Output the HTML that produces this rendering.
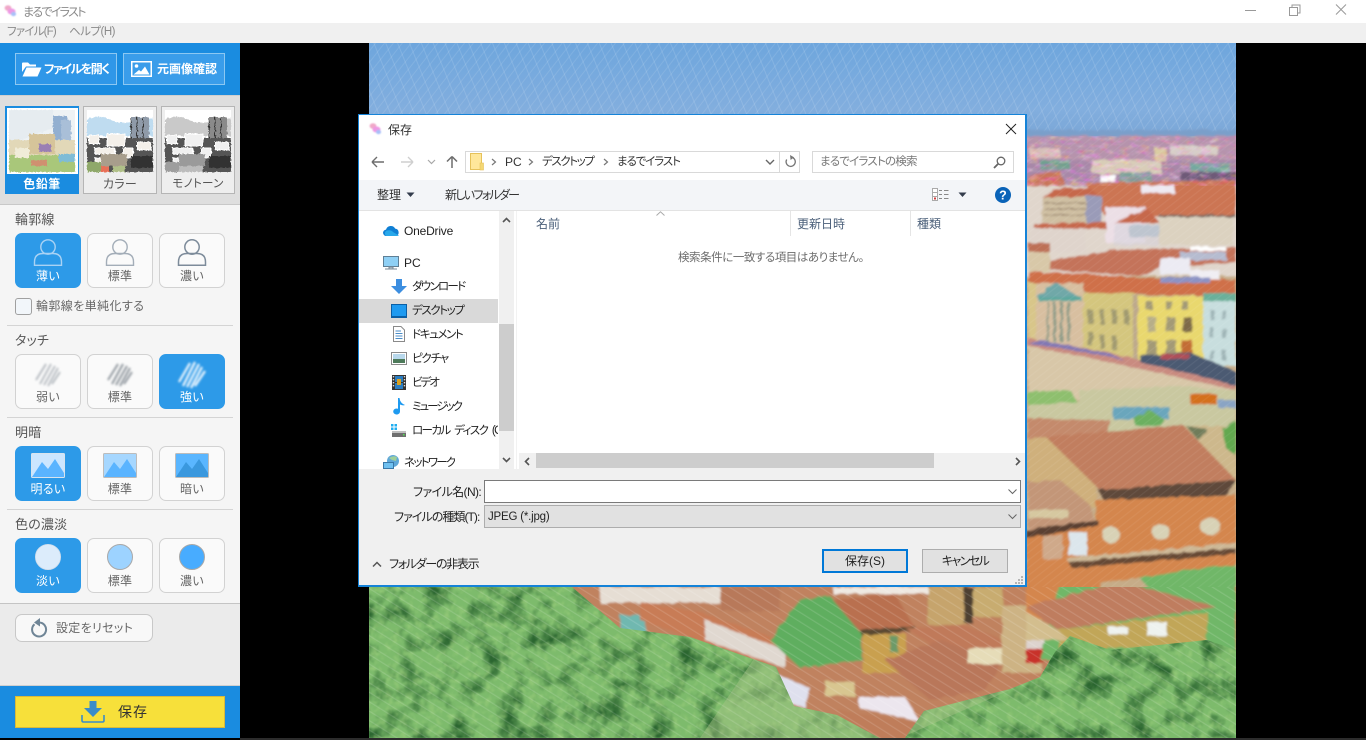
<!DOCTYPE html>
<html lang="ja"><head><meta charset="utf-8"><title>まるでイラスト</title>
<style>
*{box-sizing:border-box}
html,body{margin:0;padding:0;width:1366px;height:740px;overflow:hidden;background:#000}
body{position:relative;font-family:"Liberation Sans","Noto Sans CJK JP",sans-serif;font-feature-settings:"palt";font-size:12px;color:#333}
.a{position:absolute}
.t{position:absolute;white-space:nowrap;line-height:16px;height:16px}
.c{text-align:center}
.btn{position:absolute;width:66px;height:55px;border-radius:7px;background:#fafafa;border:1px solid #d2d2d2}
.btn.on{background:#2d9ae8;border-color:#2d9ae8}
.lb{position:absolute;width:66px;text-align:center;font-size:12px;line-height:16px;color:#666;white-space:nowrap;letter-spacing:.3px}
.lb.w{color:#fff}
.h{position:absolute;left:15px;font-size:13px;line-height:16px;color:#555;white-space:nowrap;letter-spacing:.2px}
.dv{position:absolute;left:7px;width:226px;height:1px;background:#d4d4d4}
svg{position:absolute;overflow:visible}
.n{color:#222;font-size:12px}
</style></head><body>

<!-- painting -->
<svg style="left:0;top:0" width="1366" height="740" viewBox="0 0 1366 740">
<defs>
<clipPath id="im"><rect x="369" y="43" width="867" height="695"/></clipPath>
<filter id="p" x="-5%" y="-5%" width="110%" height="110%"><feTurbulence type="fractalNoise" baseFrequency=".12" numOctaves="3" seed="5" result="n"/><feDisplacementMap in="SourceGraphic" in2="n" scale="4"/><feGaussianBlur stdDeviation="1"/></filter>
<filter id="tn" x="-5%" y="-5%" width="110%" height="110%"><feTurbulence type="fractalNoise" baseFrequency=".45" numOctaves="2" seed="9" result="n"/><feDisplacementMap in="SourceGraphic" in2="n" scale="3"/><feGaussianBlur stdDeviation=".3"/></filter>
<filter id="fol" x="0" y="0" width="100%" height="100%" color-interpolation-filters="sRGB"><feTurbulence type="fractalNoise" baseFrequency=".04" numOctaves="4" seed="8"/><feColorMatrix values="0 0 0 0 .17 0 0 0 0 .4 0 0 0 0 .19 3 0 0 0 -1.38"/><feGaussianBlur stdDeviation=".6"/></filter>
<filter id="fol2" x="0" y="0" width="100%" height="100%" color-interpolation-filters="sRGB"><feTurbulence type="fractalNoise" baseFrequency=".14" numOctaves="3" seed="21"/><feColorMatrix values="0 0 0 0 .68 0 0 0 0 .85 0 0 0 0 .52 3 0 0 0 -1.45"/><feGaussianBlur stdDeviation=".5"/></filter>
<filter id="town" x="0" y="0" width="100%" height="100%" color-interpolation-filters="sRGB"><feTurbulence type="fractalNoise" baseFrequency=".1 .22" numOctaves="3" seed="4"/><feColorMatrix values="1.7 0 0 0 0 0 1.3 0 0 0 0 0 1.4 0 .1 2.6 0 0 0 -.95"/><feGaussianBlur stdDeviation=".5"/></filter>
<filter id="bs" x="-30%" y="-30%" width="160%" height="160%"><feGaussianBlur stdDeviation="1"/></filter>
<pattern id="hatch" width="8" height="8" patternUnits="userSpaceOnUse" patternTransform="rotate(-58)"><rect width="1.2" height="8" fill="#fff" opacity=".13"/></pattern>
<pattern id="hatch2" width="11" height="11" patternUnits="userSpaceOnUse" patternTransform="rotate(-22)"><rect width="1" height="11" fill="#fff" opacity=".12"/></pattern>
<pattern id="hatch4" width="7" height="7" patternUnits="userSpaceOnUse" patternTransform="rotate(38)"><rect width="1" height="7" fill="#fff" opacity=".1"/></pattern>
<pattern id="hatch3" width="6" height="6" patternUnits="userSpaceOnUse" patternTransform="rotate(52)"><rect width="1.2" height="6" fill="#fff" opacity=".06"/></pattern>
<linearGradient id="sky" x1="0" y1="0" x2="0" y2="1"><stop offset="0" stop-color="#6ea6dd"/><stop offset=".7" stop-color="#82aede"/><stop offset="1" stop-color="#7aa6d6"/></linearGradient>
</defs>
<rect width="1366" height="740" fill="#000"/>
<rect x="240" y="738" width="1126" height="2" fill="#2c2c2c"/>
<g clip-path="url(#im)">
<rect x="369" y="43" width="867" height="695" fill="#c6ac88"/>
<rect x="369" y="43" width="867" height="95" fill="url(#sky)"/>
<rect x="369" y="43" width="867" height="95" fill="url(#hatch2)"/>
<rect x="369" y="43" width="867" height="95" fill="url(#hatch4)"/>
<g filter="url(#p)">
<rect x="1020" y="130" width="220" height="10" fill="#7a9fca"/>
<rect x="1020" y="136" width="220" height="50" fill="#b693ac"/>
<rect x="1020" y="160" width="220" height="22" fill="#a888a8"/>
<rect x="1092" y="160" width="70" height="14" fill="#d9cdb8"/><rect x="1155" y="148" width="12" height="14" fill="#dccba0"/>
<rect x="1170" y="146" width="48" height="9" fill="#d8cfc8"/><rect x="1030" y="148" width="30" height="10" fill="#d8c0b8"/>
<rect x="1120" y="172" width="32" height="10" fill="#7ea09a"/><rect x="1040" y="160" width="30" height="9" fill="#70a090"/>
<rect x="1190" y="163" width="40" height="9" fill="#74a8a0"/><rect x="1100" y="175" width="16" height="7" fill="#fff"/>
<path d="M1028 176 1060 170 1065 185 1028 190Z" fill="#c9745a"/>
<rect x="1180" y="172" width="56" height="13" fill="#6e5a78"/>
<rect x="1020" y="186" width="220" height="90" fill="#e0d6cc"/>
<path d="M1085 183 1236 180 1236 217 1105 216Z" fill="#cc7552"/>
<rect x="1141" y="185" width="34" height="8" fill="#efeaf2"/>
<path d="M1041 197 1060 188 1090 188 1100 197Z" fill="#c6684c"/>
<rect x="1042" y="197" width="48" height="26" fill="#cfbfa2"/>
<path d="M1044 203H1088M1044 209H1088M1044 215H1088" stroke="#8c7660" stroke-width="1"/>
<rect x="1086" y="196" width="16" height="30" fill="#9a9bb8"/>
<path d="M1034 224 1108 222 1108 228 1034 228Z" fill="#c6684c"/>
<rect x="1106" y="207" width="40" height="36" fill="#ecdfe6"/>
<path d="M1114 223 1147 208 1160 223Z" fill="#c6684c"/>
<rect x="1159" y="217" width="74" height="28" fill="#dcd2c0"/><rect x="1159" y="215" width="77" height="2" fill="#7d6a60"/>
<rect x="1129" y="225" width="30" height="12" fill="#a3b6c2"/>
<rect x="1114" y="224" width="45" height="22" fill="#d6d2da" opacity=".55"/>
<rect x="1030" y="228" width="55" height="24" fill="#dfd4cc"/>
<rect x="1028" y="243" width="22" height="14" fill="#bd7056"/>
<path d="M1045 262 1110 250 1200 248 1236 247 1236 262 1160 268 1140 276 1050 270Z" fill="#c4735a"/>
<rect x="1028" y="252" width="22" height="20" fill="#d8c8a8"/>
<rect x="1190" y="247" width="36" height="4" fill="#fff"/><rect x="1180" y="252" width="46" height="8" fill="#b6bcd0"/>
<rect x="1160" y="258" width="30" height="16" fill="#ecebf3"/><rect x="1190" y="270" width="30" height="12" fill="#f0eef3"/>
<path d="M1028 272 1090 274 1140 278 1236 280 1236 296 1140 294 1090 294 1082 290 1028 282Z" fill="#cf6f49"/>
<rect x="1160" y="277" width="50" height="6" fill="#8c93c4"/>
<rect x="1028" y="283" width="10" height="70" fill="#d8c68a"/>
<rect x="1036" y="283" width="48" height="64" fill="#d8bfa0"/>
<path d="M1036 297 1056 282 1080 298Z" fill="#6fa8a8"/><rect x="1038" y="297" width="44" height="4" fill="#5ca89e"/>
<g fill="#8f9c88"><rect x="1053" y="302" width="3" height="40"/><rect x="1060" y="302" width="3" height="40"/><rect x="1067" y="302" width="3" height="40"/><rect x="1047" y="302" width="2" height="40"/></g>
<rect x="1083" y="293" width="52" height="66" fill="#d4c67e"/>
<rect x="1133" y="295" width="6" height="66" fill="#bda98c"/>
<rect x="1138" y="296" width="66" height="66" fill="#e9d86e"/>
<rect x="1203" y="296" width="33" height="70" fill="#c8dede"/><rect x="1203" y="293" width="33" height="8" fill="#6ab09a"/>
<g fill="#a09a70"><rect x="1088" y="310" width="5" height="14"/><rect x="1100" y="310" width="5" height="14"/><rect x="1112" y="310" width="5" height="14"/><rect x="1124" y="310" width="5" height="14"/><rect x="1088" y="332" width="5" height="14"/><rect x="1100" y="335" width="5" height="14"/><rect x="1112" y="336" width="5" height="14"/></g>
<g fill="#a39a76"><rect x="1146" y="301" width="6" height="9"/><rect x="1166" y="301" width="6" height="9"/><rect x="1182" y="301" width="6" height="9"/><rect x="1147" y="317" width="9" height="15" fill="#b7ae88"/><rect x="1166" y="317" width="9" height="15"/><rect x="1183" y="317" width="9" height="15" fill="#7d6a48"/><rect x="1147" y="340" width="10" height="15"/><rect x="1166" y="340" width="10" height="15"/></g>
<rect x="1182" y="340" width="10" height="18" fill="#c26c35"/>
<g fill="#9fb4b6"><rect x="1210" y="310" width="4" height="10"/><rect x="1222" y="310" width="4" height="10"/><rect x="1210" y="328" width="4" height="10"/><rect x="1222" y="328" width="4" height="10"/><rect x="1210" y="350" width="4" height="10"/><rect x="1222" y="350" width="4" height="10"/></g>
<path d="M1028 342 1090 356 1236 378 1236 400 1028 400Z" fill="#d8c7a8"/>
<path d="M1028 346 1100 360 1236 390 1236 382 1110 353 1028 338Z" fill="#c98b80"/>
<path d="M1028 344 1060 348 1125 360 1110 354 1040 340Z" fill="#8278b4"/>
<path d="M1140 356 1190 352 1236 372 1236 386 1200 376 1140 362Z" fill="#4b5a72"/>
<rect x="1160" y="354" width="30" height="5" fill="#b04f58"/>
<path d="M1028 392 1070 390 1080 406 1028 408Z" fill="#8ebf6e"/>
<path d="M1080 390 1175 386 1236 390 1236 440 1028 440 1028 405 1080 402Z" fill="#c9c8a0"/>
<rect x="1113" y="407" width="56" height="12" fill="#6aa6bc"/>
<rect x="1190" y="394" width="27" height="10" fill="#d4701e"/>
<rect x="1218" y="400" width="18" height="8" fill="#8aa4c4"/>
<path d="M1134 418 1150 410 1165 420 1160 426 1136 426Z" fill="#6cb060"/>
<path d="M1028 418 1110 420 1106 436 1028 445Z" fill="#c48a6c"/>
<rect x="1183" y="426" width="53" height="60" fill="#cdb88c"/>
<path d="M1222 428 1236 420 1236 456 1226 448Z" fill="#62a850"/>
<path d="M1186 426 1208 430 1198 440Z" fill="#6f7c5a"/>
<path d="M1028 440 1046 437 1096 480 1096 508 1028 500Z" fill="#cfb07c"/>
<path d="M1046 437 1183 425 1236 480 1100 490Z" fill="#c17e5e"/>
<path d="M1098 490 1236 480 1226 495 1105 502Z" fill="#5f4a3a"/>
<path d="M1096 500 1236 495 1236 566 1040 590 1028 530 1096 525Z" fill="#d4864e"/>
<path d="M1028 482 1060 480 1090 505 1095 522 1028 532 1028 500Z" fill="#c39678"/>
<rect x="1028" y="510" width="40" height="8" fill="#d6c8a0"/>
<path d="M1026 530 1098 520 1098 528 1026 538Z" fill="#5a4030"/>
<path d="M1026 538 1100 525 1100 590 1026 600Z" fill="#d4864e"/>
<path d="M1066 558 1236 543 1236 548 1068 562Z" fill="#cdb896"/>
<path d="M1068 562 1236 548 1236 554 1072 568Z" fill="#664836"/>
<rect x="1043" y="535" width="20" height="24" fill="#cfa98a"/>
<rect x="1069" y="532" width="18" height="24" fill="#dce6ec"/>
<g fill="#d8d2b6"><ellipse cx="1111" cy="535" rx="9" ry="8"/><ellipse cx="1161" cy="532" rx="9" ry="8"/><ellipse cx="1210" cy="526" rx="10" ry="9"/></g>
<path d="M1140 578 1212 566 1236 566 1236 600 1160 600Z" fill="#6fb767"/>
</g>
<rect x="1020" y="136" width="220" height="50" filter="url(#town)" opacity=".35"/>
<rect x="1020" y="138" width="220" height="450" fill="url(#hatch3)"/>
</g>
</svg>

<!-- bottom painting -->
<svg style="left:0;top:0" width="1366" height="740" viewBox="0 0 1366 740">
<defs><clipPath id="g1"><path d="M369 587 572 587 620 628 690 637 776 667 794 706 837 715 898 748 924 711 1010 689 1040 677 1055 652 1070 636 1110 650 1207 640 1236 650 1236 738 369 738Z"/></clipPath><clipPath id="im2"><rect x="369" y="587" width="867" height="151"/></clipPath></defs>
<g clip-path="url(#im2)">
<g filter="url(#p)">
<rect x="560" y="580" width="690" height="165" fill="#c0825e"/>
<rect x="600" y="587" width="130" height="16" fill="#e6ded4"/>
<rect x="620" y="615" width="26" height="22" fill="#6fb8b0"/>
<path d="M640 602 700 612 780 640 770 665 690 637 640 620Z" fill="#c87b56"/>
<path d="M705 620 785 650 785 668 705 640Z" fill="#e0d8d0"/>
<rect x="720" y="587" width="60" height="24" fill="#b8795a"/>
<path d="M770 640 800 600 830 596 862 630 862 660 800 668Z" fill="#5fae5f"/>
<path d="M833 600 895 594 915 628 860 632Z" fill="#b97050"/>
<path d="M860 630 915 626 915 631 862 636Z" fill="#5a4a30"/>
<rect x="833" y="587" width="95" height="7" fill="#efe9e2"/>
<rect x="863" y="634" width="43" height="39" fill="#c9a050"/>
<rect x="890" y="636" width="8" height="16" fill="#6d9a68"/>
<rect x="928" y="587" width="38" height="38" fill="#c6a46c"/><rect x="964" y="587" width="9" height="36" fill="#4e4030"/><rect x="973" y="587" width="30" height="30" fill="#c8ac70"/>
<path d="M905 628 965 625 1004 640 1004 650 940 650Z" fill="#c07a5a"/>
<path d="M885 660 940 640 1002 662 985 690 930 700Z" fill="#b9775a"/>
<rect x="968" y="648" width="34" height="16" fill="#e6dcb8"/>
<rect x="1002" y="605" width="40" height="68" fill="#cdb384"/>
<rect x="1026" y="632" width="25" height="28" fill="#ddd3ce"/>
<rect x="1026" y="649" width="18" height="14" fill="#c8332a"/>
<path d="M772 672 810 688 805 708 785 702 772 695Z" fill="#dfe0ee"/>
<rect x="825" y="682" width="30" height="14" fill="#d8c690"/>
<path d="M858 697 905 697 920 722 860 708Z" fill="#ece6ee"/>
<path d="M838 710 900 720 920 722 900 750 860 740Z" fill="#bf7d5a"/>
<rect x="1026" y="580" width="60" height="40" fill="#d4864e"/>
<path d="M1060 580 1236 580 1236 660 1040 660Z" fill="#6fb767"/>
<path d="M1026 607 1120 581 1216 607 1058 630Z" fill="#bf7d5e"/>
<path d="M1058 630 1208 612 1206 645 1060 650Z" fill="#c1a658"/>
<rect x="1108" y="627" width="20" height="7" fill="#eef2ee"/><rect x="1147" y="622" width="20" height="14" fill="#eef2ee"/>
<path d="M1026 612 1058 630 1068 640 1026 640Z" fill="#d3be8e"/>
</g>
<g clip-path="url(#g1)">
<rect x="369" y="587" width="867" height="151" fill="#7dbb6c"/>
<rect x="369" y="587" width="867" height="151" filter="url(#fol)"/>
<rect x="369" y="587" width="867" height="151" filter="url(#fol2)" opacity=".4"/>
<path d="M760 650 1010 690 900 738 700 738Z" fill="#a9c688" opacity=".45"/>
</g>
<rect x="369" y="587" width="867" height="151" fill="url(#hatch)"/>
</g>
</svg>

<!-- title & menu -->
<div class="a" style="left:0;top:0;width:1366px;height:23px;background:#fff"></div>
<svg style="left:4px;top:4px" width="13" height="14" viewBox="0 0 13 14"><defs><filter id="b1" x="-30%" y="-30%" width="160%" height="160%"><feGaussianBlur stdDeviation=".7"/></filter></defs><g filter="url(#b1)"><ellipse cx="4" cy="4" rx="3.4" ry="2.8" fill="#f0a8c8"/><ellipse cx="7.5" cy="7.5" rx="4" ry="3" fill="#ee98e4"/><ellipse cx="9.5" cy="10" rx="2.6" ry="2.2" fill="#a8c0f8"/></g></svg>
<div class="t" style="left:23px;top:4px;color:#8a8a8a;font-size:12px;letter-spacing:-1.7px">まるでイラスト</div>
<div class="a" style="left:0;top:23px;width:1366px;height:20px;background:#f0f0f0"></div>
<div class="t" style="left:7px;top:24px;color:#8a8a8a;font-size:11.5px;letter-spacing:-.8px">ファイル(F)</div>
<div class="t" style="left:69px;top:24px;color:#8a8a8a;font-size:11.5px;letter-spacing:-.5px">ヘルプ(H)</div>
<svg style="left:1245px;top:5px" width="12" height="12"><path d="M0 5.5H11" stroke="#999" stroke-width="1"/></svg>
<svg style="left:1289px;top:4px" width="12" height="12"><path d="M.5 3.5H8.5V11.5H.5ZM3 3V1H11V9H9" fill="none" stroke="#999" stroke-width="1"/></svg>
<svg style="left:1335px;top:4px" width="12" height="12"><path d="M1 .5 11 10.5M11 .5 1 10.5" stroke="#999" stroke-width="1"/></svg>

<!-- sidebar -->
<div class="a" style="left:0;top:43px;width:240px;height:695px;background:#f5f5f5"></div>
<div class="a" style="left:0;top:43px;width:240px;height:52px;background:#1a8ce0"></div>
<div class="a" style="left:0;top:95px;width:240px;height:110px;background:#dedede;border-top:1px solid #cfcfcf;border-bottom:1px solid #c8c8c8"></div>
<div class="a" style="left:15px;top:53px;width:102px;height:32px;background:#2f97e8;border:1px solid #8cc8f2"></div>
<div class="a" style="left:123px;top:53px;width:102px;height:32px;background:#3a9dea;border:1px solid #8cc8f2"></div>
<svg style="left:22px;top:61px" width="20" height="17" viewBox="0 0 20 17"><path d="M0 2.5Q0 1.5 1 1.5H6L8 3.5H14V5.5H4L0 11Z" fill="#fff"/><path d="M4.5 6.5H19.5L15.5 15.5H.5Z" fill="#fff"/></svg>
<div class="t" style="left:44px;top:61px;color:#fff;font-weight:bold;font-size:12px;letter-spacing:-1.5px">ファイルを開く</div>
<svg style="left:131px;top:61px" width="21" height="16" viewBox="0 0 21 16"><rect x=".75" y=".75" width="19.5" height="14.5" fill="#3a9dea" stroke="#fff" stroke-width="1.5"/><circle cx="5.5" cy="5" r="1.8" fill="#fff"/><path d="M2.5 13.5 8 9l2 1.5L14 5.5l4.5 8Z" fill="#fff"/></svg>
<div class="t" style="left:157px;top:61px;color:#fff;font-weight:bold;font-size:12px">元画像確認</div>

<!-- thumbs -->
<div class="a" style="left:5px;top:106px;width:74px;height:88px;background:#1a8ce0"></div>
<div class="a" style="left:7px;top:108px;width:71px;height:66px;background:#fff"></div>
<svg style="left:9px;top:110px" width="66" height="62" viewBox="0 0 66 62"><rect width="66" height="62" fill="#eef2f4"/><g filter="url(#tn)"><path d="M0 0H44V18L0 34Z" fill="#e6ecf0"/><rect x="44" y="6" width="14" height="24" fill="#92afd0"/><rect x="52" y="10" width="10" height="22" fill="#a9bfd8"/><rect x="0" y="30" width="66" height="16" fill="#e2d8b8"/><rect x="20" y="24" width="26" height="20" fill="#d6c49a"/><rect x="30" y="34" width="12" height="8" fill="#9a7fb4"/><rect x="0" y="45" width="66" height="17" fill="#a9c77a"/><rect x="6" y="38" width="14" height="10" fill="#f0ecd8"/><rect x="50" y="44" width="16" height="8" fill="#7fbcd6"/><rect x="22" y="50" width="16" height="6" fill="#d09070"/></g></svg>
<div class="lb w" style="left:9px;top:176px;font-weight:bold;letter-spacing:.5px">色鉛筆</div>
<div class="a" style="left:83px;top:106px;width:74px;height:88px;background:#eee;border:1px solid #b5b5b5"></div>
<svg style="left:87px;top:110px" width="66" height="62" viewBox="0 0 66 62"><rect width="66" height="62" fill="#fff"/><g filter="url(#tn)"><path d="M0 9Q14 4 24 10T66 8V26H0Z" fill="#bfdcf0"/><rect x="44" y="7" width="18" height="24" fill="#8f9aa8"/><path d="M44 7V31M50 7V31M56 7V31" stroke="#333"/><rect y="28" width="66" height="34" fill="#555"/><path d="M2 25H12V34H2ZM20 24H38V36H20ZM8 38H28V44H8ZM8 48H24V52H8ZM36 38H46V48H36ZM50 32H64V40H50Z" fill="#f4f0ea" stroke="#fff"/><rect x="14" y="44" width="26" height="12" fill="#a89e8c"/><rect x="44" y="46" width="22" height="12" fill="#333"/><rect y="52" width="14" height="10" fill="#8fa86a"/><rect x="14" y="56" width="8" height="6" fill="#e87058"/><rect x="26" y="56" width="12" height="6" fill="#b0c088"/></g></svg>
<div class="lb" style="left:87px;top:176px;color:#555">カラー</div>
<div class="a" style="left:161px;top:106px;width:74px;height:88px;background:#eee;border:1px solid #b5b5b5"></div>
<svg style="left:165px;top:110px" width="66" height="62" viewBox="0 0 66 62"><rect width="66" height="62" fill="#fff"/><g filter="url(#tn)"><path d="M0 9Q14 4 24 10T66 8V26H0Z" fill="#c9c9c9"/><rect x="44" y="7" width="18" height="24" fill="#8a8a8a"/><path d="M44 7V31M50 7V31M56 7V31" stroke="#333"/><rect y="28" width="66" height="34" fill="#555"/><path d="M2 25H12V34H2ZM20 24H38V36H20ZM8 38H28V44H8ZM8 48H24V52H8ZM36 38H46V48H36ZM50 32H64V40H50Z" fill="#f0f0f0" stroke="#fff"/><rect x="14" y="44" width="26" height="12" fill="#9a9a9a"/><rect x="44" y="46" width="22" height="12" fill="#333"/><rect y="52" width="14" height="10" fill="#9e9e9e"/><rect x="14" y="56" width="24" height="6" fill="#bcbcbc"/></g></svg>
<div class="lb" style="left:165px;top:176px;color:#555;font-size:11.5px">モノトーン</div>

<!-- sections -->
<div class="h" style="top:212px">輪郭線</div>
<div class="btn on" style="left:15px;top:233px"></div><div class="btn" style="left:87px;top:233px"></div><div class="btn" style="left:159px;top:233px"></div>
<svg style="left:33px;top:237px" width="30" height="30" viewBox="0 0 30 30"><g fill="none" stroke="#a9d2f4" stroke-width="1.4"><circle cx="15" cy="10" r="7.2"/><path d="M1.5 28.3V25Q1.5 16.5 10 16.5H20Q28.5 16.5 28.5 25V28.3Z"/></g></svg>
<svg style="left:105px;top:237px" width="30" height="30" viewBox="0 0 30 30"><g fill="none" stroke="#a3adb8" stroke-width="1.4"><circle cx="15" cy="10" r="7.2"/><path d="M1.5 28.3V25Q1.5 16.5 10 16.5H20Q28.5 16.5 28.5 25V28.3Z"/></g></svg>
<svg style="left:177px;top:237px" width="30" height="30" viewBox="0 0 30 30"><g fill="none" stroke="#7d8b9a" stroke-width="1.5"><circle cx="15" cy="10" r="7.2"/><path d="M1.5 28.3V25Q1.5 16.5 10 16.5H20Q28.5 16.5 28.5 25V28.3Z"/></g></svg>
<div class="lb w" style="left:15px;top:268px">薄い</div><div class="lb" style="left:87px;top:268px">標準</div><div class="lb" style="left:159px;top:268px">濃い</div>
<div class="a" style="left:15px;top:298px;width:17px;height:17px;border:1px solid #a0a0a0;border-radius:3px;background:#f2f6fa"></div>
<div class="t" style="left:36px;top:298px;color:#666;font-size:12px;letter-spacing:.4px">輪郭線を単純化する</div>
<div class="dv" style="top:325px"></div>

<div class="h" style="top:333px">タッチ</div>
<div class="btn" style="left:15px;top:354px"></div><div class="btn" style="left:87px;top:354px"></div><div class="btn on" style="left:159px;top:354px"></div>
<svg style="left:33px;top:358px" width="30" height="30" viewBox="0 0 30 30"><g filter="url(#bs)" stroke="#b0b6bc" stroke-width="1.7" fill="none"><path d="M3 22 13 6M7 26 18 6M11 27 22 8M15 28 25 10M19 26 27 14"/></g></svg>
<svg style="left:105px;top:358px" width="30" height="30" viewBox="0 0 30 30"><g filter="url(#bs)" stroke="#8e959c" stroke-width="1.9" fill="none"><path d="M3 22 13 6M7 26 18 6M11 27 22 8M15 28 25 10M19 26 27 14"/></g></svg>
<svg style="left:177px;top:358px" width="30" height="30" viewBox="0 0 30 30"><g filter="url(#bs)" stroke="#f4faff" stroke-width="2.2" fill="none"><path d="M2 24 13 5M6 28 18 4M10 29 22 6M14 30 25 9M18 28 28 13"/></g></svg>
<div class="lb" style="left:15px;top:389px">弱い</div><div class="lb" style="left:87px;top:389px">標準</div><div class="lb w" style="left:159px;top:389px">強い</div>
<div class="dv" style="top:417px"></div>

<div class="h" style="top:425px">明暗</div>
<div class="btn on" style="left:15px;top:446px"></div><div class="btn" style="left:87px;top:446px"></div><div class="btn" style="left:159px;top:446px"></div>
<svg style="left:31px;top:453px" width="34" height="25" viewBox="0 0 34 25"><rect x=".5" y=".5" width="33" height="24" rx="1" fill="#cbe6ff" stroke="#d8e4ee"/><path d="M1 24 11 9 17 16 24 6 33 20V24Z" fill="#5ab4ff"/></svg>
<svg style="left:103px;top:453px" width="34" height="25" viewBox="0 0 34 25"><rect x=".5" y=".5" width="33" height="24" rx="1" fill="#a6d7ff" stroke="#bcbcbc"/><path d="M1 24 11 9 17 16 24 6 33 20V24Z" fill="#5ab4ff"/></svg>
<svg style="left:175px;top:453px" width="34" height="25" viewBox="0 0 34 25"><rect x=".5" y=".5" width="33" height="24" rx="1" fill="#5ab6ff" stroke="#bcbcbc"/><path d="M1 24 11 9 17 16 24 6 33 20V24Z" fill="#3a98de"/></svg>
<div class="lb w" style="left:15px;top:481px">明るい</div><div class="lb" style="left:87px;top:481px">標準</div><div class="lb" style="left:159px;top:481px">暗い</div>
<div class="dv" style="top:509px"></div>

<div class="h" style="top:517px">色の濃淡</div>
<div class="btn on" style="left:15px;top:538px"></div><div class="btn" style="left:87px;top:538px"></div><div class="btn" style="left:159px;top:538px"></div>
<svg style="left:35px;top:544px" width="26" height="26"><circle cx="13" cy="13" r="12.6" fill="#dcecfb" stroke="#cfdcea" stroke-width=".8"/></svg>
<svg style="left:107px;top:544px" width="26" height="26"><circle cx="13" cy="13" r="12.5" fill="#9dd3ff" stroke="#a8a8a8"/></svg>
<svg style="left:179px;top:544px" width="26" height="26"><circle cx="13" cy="13" r="12.5" fill="#48acff" stroke="#a8a8a8"/></svg>
<div class="lb w" style="left:15px;top:573px">淡い</div><div class="lb" style="left:87px;top:573px">標準</div><div class="lb" style="left:159px;top:573px">濃い</div>

<div class="a" style="left:0;top:603px;width:240px;height:83px;background:#ebebeb;border-top:1px solid #c4c4c4;border-bottom:1px solid #cfcfcf"></div>
<div class="a" style="left:15px;top:614px;width:138px;height:28px;border-radius:7px;background:#f8f8f8;border:1px solid #c8c8c8"></div>
<svg style="left:30px;top:618px" width="18" height="20" viewBox="0 0 18 20"><path d="M4.5 6.2A7 7 0 1 0 9 4.5" fill="none" stroke="#6f8596" stroke-width="2"/><path d="M10 0 4 4.5 10 8.5Z" fill="#6f8596"/></svg>
<div class="t" style="left:56px;top:620px;color:#666;font-size:12px;letter-spacing:.3px">設定をリセット</div>

<div class="a" style="left:0;top:686px;width:240px;height:52px;background:#1a8ce0"></div>
<div class="a" style="left:15px;top:696px;width:210px;height:32px;background:#f7e03a;border:1px solid #d9b93a"></div>
<svg style="left:81px;top:700px" width="24" height="23" viewBox="0 0 24 23"><path d="M8.5 1H15.5V8H21L12 17 3 8H8.5Z" fill="#3a8cc8"/><path d="M1 15V20.5Q1 22 2.5 22H21.5Q23 22 23 20.5V15" fill="none" stroke="#3a8cc8" stroke-width="1.6"/></svg>
<div class="t" style="left:118px;top:703px;color:#333;font-size:14px;height:18px;line-height:18px;letter-spacing:1px">保存</div>

<!-- dialog -->
<div class="a" style="left:358px;top:114px;width:669px;height:473px;background:#fff;border:1px solid #1583d8;border-width:1px 2px 2px 1px"></div>
<svg style="left:369px;top:122px" width="13" height="14" viewBox="0 0 13 14"><g filter="url(#b1)"><ellipse cx="4" cy="4" rx="3.4" ry="2.8" fill="#f0a8c8"/><ellipse cx="7.5" cy="7.5" rx="4" ry="3" fill="#ee98e4"/><ellipse cx="9.5" cy="10" rx="2.6" ry="2.2" fill="#a8c0f8"/></g></svg>
<div class="t n" style="left:388px;top:122px;color:#333">保存</div>
<svg style="left:1005px;top:123px" width="12" height="12"><path d="M1 1 11 11M11 1 1 11" stroke="#222" stroke-width="1"/></svg>

<svg style="left:371px;top:155px" width="14" height="14" viewBox="0 0 14 14"><path d="M1 7H13M1 7 6 2M1 7 6 12" fill="none" stroke="#6d6d6d" stroke-width="1.4"/></svg>
<svg style="left:400px;top:155px" width="14" height="14" viewBox="0 0 14 14"><path d="M1 7H13M13 7 8 2M13 7 8 12" fill="none" stroke="#cfcfcf" stroke-width="1.4"/></svg>
<svg style="left:427px;top:159px" width="9" height="6" viewBox="0 0 9 6"><path d="M1 1 4.5 4.5 8 1" fill="none" stroke="#a8a8a8" stroke-width="1.2"/></svg>
<svg style="left:445px;top:155px" width="14" height="14" viewBox="0 0 14 14"><path d="M7 13V1.5M7 1.5 2 6.5M7 1.5 12 6.5" fill="none" stroke="#6d6d6d" stroke-width="1.5"/></svg>
<div class="a" style="left:465px;top:151px;width:335px;height:22px;border:1px solid #d9d9d9;background:#fff"></div>
<div class="a" style="left:779px;top:151px;width:1px;height:22px;background:#d9d9d9"></div>
<svg style="left:470px;top:153px" width="14" height="18" viewBox="0 0 14 18"><rect x=".5" y=".5" width="11" height="16" fill="#ffe79a" stroke="#e6c25a"/><rect x="10" y="10" width="3.5" height="7" fill="#f4d874" stroke="#e6c25a" stroke-width=".6"/></svg>
<svg style="left:491px;top:158px" width="6" height="8" viewBox="0 0 6 8"><path d="M1 1 4.5 4 1 7" fill="none" stroke="#777" stroke-width="1.2"/></svg>
<div class="t n" style="left:505px;top:154px;color:#333">PC</div>
<svg style="left:528px;top:158px" width="6" height="8" viewBox="0 0 6 8"><path d="M1 1 4.5 4 1 7" fill="none" stroke="#777" stroke-width="1.2"/></svg>
<div class="t n" style="left:542px;top:154px;color:#333;font-size:11.5px;letter-spacing:-1.4px">デスクトップ</div>
<svg style="left:603px;top:158px" width="6" height="8" viewBox="0 0 6 8"><path d="M1 1 4.5 4 1 7" fill="none" stroke="#777" stroke-width="1.2"/></svg>
<div class="t n" style="left:617px;top:154px;color:#333;font-size:11.5px;letter-spacing:-1.1px">まるでイラスト</div>
<svg style="left:765px;top:159px" width="10" height="7" viewBox="0 0 10 7"><path d="M1 1 5 5 9 1" fill="none" stroke="#666" stroke-width="1.4"/></svg>
<svg style="left:784px;top:155px" width="12" height="13" viewBox="0 0 12 13"><path d="M7 2.2A4.6 4.6 0 1 1 2.7 4.5" fill="none" stroke="#777" stroke-width="1.3"/><path d="M6 0 10 2.2 6.6 5Z" fill="#777"/></svg>
<div class="a" style="left:812px;top:151px;width:202px;height:22px;border:1px solid #d9d9d9;background:#fff"></div>
<div class="t" style="left:820px;top:154px;color:#777;font-size:11.5px;letter-spacing:-.8px">まるでイラストの検索</div>
<svg style="left:993px;top:156px" width="13" height="13" viewBox="0 0 13 13"><circle cx="8" cy="5" r="3.8" fill="none" stroke="#666" stroke-width="1.3"/><path d="M5.2 7.8 1 12" stroke="#666" stroke-width="1.8"/></svg>

<div class="a" style="left:359px;top:180px;width:666px;height:31px;background:#f3f5f8;border-bottom:1px solid #e3e3e3"></div>
<div class="t n" style="left:377px;top:187px;color:#333;font-size:12px">整理</div>
<svg style="left:406px;top:192px" width="9" height="6"><path d="M.5.5H8.5L4.5 5Z" fill="#333c4c"/></svg>
<div class="t n" style="left:445px;top:187px;color:#333;font-size:12px;letter-spacing:-1.7px">新しいフォルダー</div>
<svg style="left:932px;top:188px" width="17" height="13" viewBox="0 0 17 13"><path d="M.5.5H5.5V12.5H.5ZM.5 4.5H5.5M.5 8.5H5.5" fill="#fff" stroke="#aaa"/><path d="M7 2.5H10M12 2.5H16.5M7 6.5H10M12 6.5H16.5M7 10.5H10M12 10.5H16.5" stroke="#888"/><rect x="2" y="9.5" width="2" height="2" fill="#d04040"/></svg>
<svg style="left:958px;top:192px" width="9" height="6"><path d="M.5.5H8.5L4.5 5Z" fill="#333c4c"/></svg>
<svg style="left:995px;top:187px" width="16" height="16"><circle cx="8" cy="8" r="8" fill="#0a63b8"/><text x="8" y="12.5" font-size="12.5" font-weight="bold" fill="#fff" text-anchor="middle" font-family="Liberation Sans,sans-serif">?</text></svg>

<!-- nav tree -->
<div class="a" style="left:359px;top:299px;width:139px;height:24px;background:#d9d9d9"></div>
<svg style="left:383px;top:224px" width="17" height="13" viewBox="0 0 17 13"><path d="M3.5 12A3.2 3.2 0 0 1 3 5.6 5 5 0 0 1 12.2 4.6 3.8 3.8 0 0 1 13 12Z" fill="#0f7fd4"/><path d="M3.5 12A3 3 0 0 1 4 6.5Q8 5.5 10 8L16 11.5Q15 12 13 12Z" fill="#28a8ea"/></svg>
<div class="t n" style="left:404px;top:223px;color:#222;letter-spacing:-.2px">OneDrive</div>
<svg style="left:383px;top:256px" width="17" height="14" viewBox="0 0 17 14"><rect x=".5" y=".5" width="15" height="10" fill="#8fd0f5" stroke="#5f7f95"/><path d="M6 11H10V13H6ZM2 13H14" stroke="#7a8a96" fill="#c4ced6"/></svg>
<div class="t n" style="left:404px;top:255px;color:#222">PC</div>
<svg style="left:391px;top:279px" width="16" height="15" viewBox="0 0 16 15"><path d="M5 0H11V7H16L8 15 0 7H5Z" fill="#3c8ee0"/></svg>
<div class="t n" style="left:412px;top:279px;color:#222;font-size:11.5px;letter-spacing:-1.7px">ダウンロード</div>
<svg style="left:391px;top:304px" width="16" height="14" viewBox="0 0 16 14"><rect x=".5" y=".5" width="15" height="12" fill="#1e9af0" stroke="#0b5fa5"/><path d="M0 13.5H16" stroke="#0b5fa5"/></svg>
<div class="t n" style="left:412px;top:303px;color:#222;font-size:11.5px;letter-spacing:-1.4px">デスクトップ</div>
<svg style="left:393px;top:326px" width="12" height="16" viewBox="0 0 12 16"><path d="M.5.5H8L11.5 4V15.5H.5Z" fill="#fff" stroke="#8a8a8a"/><path d="M2.5 5H8M2.5 7.5H9.5M2.5 10H9.5M2.5 12.5H9.5" stroke="#4b8dc8"/></svg>
<div class="t n" style="left:412px;top:327px;color:#222;font-size:11.5px;letter-spacing:-1.4px">ドキュメント</div>
<svg style="left:391px;top:352px" width="16" height="13" viewBox="0 0 16 13"><rect x=".5" y=".5" width="15" height="12" fill="#fff" stroke="#8a8a8a"/><rect x="2" y="2" width="12" height="5" fill="#b8d8ec"/><rect x="2" y="7" width="12" height="4" fill="#4d7a5a"/></svg>
<div class="t n" style="left:412px;top:351px;color:#222;font-size:11.5px;letter-spacing:-1.2px">ピクチャ</div>
<svg style="left:392px;top:375px" width="14" height="15" viewBox="0 0 14 15"><rect width="14" height="15" fill="#333"/><rect x="3" y="1" width="8" height="6" fill="#2a7cc0"/><rect x="3" y="8" width="8" height="6" fill="#2a7cc0"/><rect x="5" y="4" width="4" height="6" fill="#d8a020"/><path d="M.8 1h1.4v1.4H.8zM.8 4h1.4v1.4H.8zM.8 7h1.4v1.4H.8zM.8 10h1.4v1.4H.8zM11.8 1h1.4v1.4h-1.4zM11.8 4h1.4v1.4h-1.4zM11.8 7h1.4v1.4h-1.4zM11.8 10h1.4v1.4h-1.4z" fill="#ddd"/></svg>
<div class="t n" style="left:412px;top:375px;color:#222;font-size:11.5px;letter-spacing:-2px">ビデオ</div>
<svg style="left:393px;top:398px" width="13" height="17" viewBox="0 0 13 17"><path d="M5 0H6.5Q7 5 12 7 10 8 7 6.5V13.5A3.4 3 0 1 1 5 10.8Z" fill="#1e9af0"/></svg>
<div class="t n" style="left:412px;top:399px;color:#222;font-size:11.5px;letter-spacing:-2px">ミュージック</div>
<svg style="left:391px;top:424px" width="15" height="14" viewBox="0 0 15 14"><path d="M0 0H2.5V2.5H0ZM3.5 0H6V2.5H3.5ZM0 3.5H2.5V6H0ZM3.5 3.5H6V6H3.5Z" fill="#20aef0"/><rect x="1" y="8" width="14" height="5" fill="#6f6f6f"/><rect x="1" y="7" width="14" height="2" fill="#c0c0c0"/><rect x="12" y="10" width="1.5" height="1.5" fill="#4fe04f"/></svg>
<div class="a" style="left:412px;top:423px;width:86px;height:16px;overflow:hidden"><div class="t n" style="left:0;top:0;color:#222;font-size:11.5px;letter-spacing:-1.6px;word-spacing:3px">ローカル ディスク (C:)</div></div>
<svg style="left:383px;top:455px" width="17" height="14" viewBox="0 0 17 14"><circle cx="10" cy="6" r="6" fill="#5fa8d8"/><path d="M6 3Q10 0 14 2L13 6 9 5Z" fill="#9fcf9a"/><rect x=".5" y="7.5" width="10" height="6" fill="#6fc0f0" stroke="#3a78a8"/></svg>
<div class="t n" style="left:404px;top:455px;color:#222;font-size:11.5px;height:14px;overflow:hidden;letter-spacing:-1.7px">ネットワーク</div>

<div class="a" style="left:499px;top:211px;width:15px;height:258px;background:#f0f0f0"></div>
<div class="a" style="left:499px;top:324px;width:15px;height:107px;background:#cdcdcd"></div>
<svg style="left:502px;top:217px" width="9" height="6"><path d="M1 5 4.5 1.5 8 5" fill="none" stroke="#555" stroke-width="1.6"/></svg>
<svg style="left:502px;top:457px" width="9" height="6"><path d="M1 1 4.5 4.5 8 1" fill="none" stroke="#555" stroke-width="1.6"/></svg>
<div class="a" style="left:516px;top:211px;width:1px;height:258px;background:#f2f2f2"></div>

<!-- list -->
<svg style="left:656px;top:211px" width="9" height="5"><path d="M.5 4.5 4.5 .8 8.5 4.5" fill="none" stroke="#aaa"/></svg>
<div class="t n" style="left:536px;top:216px;color:#4c607a">名前</div>
<div class="a" style="left:790px;top:211px;width:1px;height:25px;background:#e5e5e5"></div>
<div class="t n" style="left:797px;top:216px;color:#4c607a">更新日時</div>
<div class="a" style="left:910px;top:211px;width:1px;height:25px;background:#e5e5e5"></div>
<div class="t n" style="left:917px;top:216px;color:#4c607a">種類</div>
<div class="t" style="left:678px;top:250px;color:#6d6d6d;font-size:11.5px;letter-spacing:-.45px">検索条件に一致する項目はありません。</div>

<div class="a" style="left:519px;top:453px;width:506px;height:16px;background:#f0f0f0"></div>
<div class="a" style="left:536px;top:453px;width:398px;height:15px;background:#cdcdcd"></div>
<svg style="left:524px;top:457px" width="6" height="9"><path d="M5 1 1.5 4.5 5 8" fill="none" stroke="#555" stroke-width="1.6"/></svg>
<svg style="left:1015px;top:457px" width="6" height="9"><path d="M1 1 4.5 4.5 1 8" fill="none" stroke="#555" stroke-width="1.6"/></svg>

<!-- footer -->
<div class="a" style="left:359px;top:469px;width:666px;height:116px;background:#f0f0f0"></div>
<div class="t n" style="left:413px;top:484px;color:#222;letter-spacing:-.6px">ファイル名(N):</div>
<div class="a" style="left:484px;top:480px;width:537px;height:23px;background:#fff;border:1px solid #7a7a7a"></div>
<svg style="left:1008px;top:489px" width="9" height="6"><path d="M.5.5 4.5 4.5 8.5.5" fill="none" stroke="#666"/></svg>
<div class="t n" style="left:394px;top:509px;color:#222;letter-spacing:-.95px">ファイルの種類(T):</div>
<div class="a" style="left:484px;top:505px;width:537px;height:23px;background:#e1e1e1;border:1px solid #adadad"></div>
<div class="t n" style="left:488px;top:509px;color:#222;font-size:11.5px;letter-spacing:-.2px">JPEG (*.jpg)</div>
<svg style="left:1008px;top:514px" width="9" height="6"><path d="M.5.5 4.5 4.5 8.5.5" fill="none" stroke="#666"/></svg>
<svg style="left:372px;top:561px" width="10" height="7"><path d="M1 5.5 5 1.5 9 5.5" fill="none" stroke="#555" stroke-width="1.5"/></svg>
<div class="t n" style="left:389px;top:556px;color:#222;letter-spacing:-1.3px">フォルダーの非表示</div>
<div class="a" style="left:822px;top:549px;width:86px;height:24px;background:#e1e1e1;border:2px solid #0078d7"></div>
<div class="t n c" style="left:822px;top:553px;width:86px;color:#222">保存(S)</div>
<div class="a" style="left:922px;top:549px;width:86px;height:24px;background:#e1e1e1;border:1px solid #adadad"></div>
<div class="t n c" style="left:922px;top:553px;width:86px;color:#222;letter-spacing:-1.6px">キャンセル</div>
<svg style="left:1014px;top:575px" width="10" height="10"><path d="M7 1h2v2H7zM4 4h2v2H4zM7 4h2v2H7zM1 7h2v2H1zM4 7h2v2H4zM7 7h2v2H7z" fill="#b5b5b5"/></svg>
</body></html>
